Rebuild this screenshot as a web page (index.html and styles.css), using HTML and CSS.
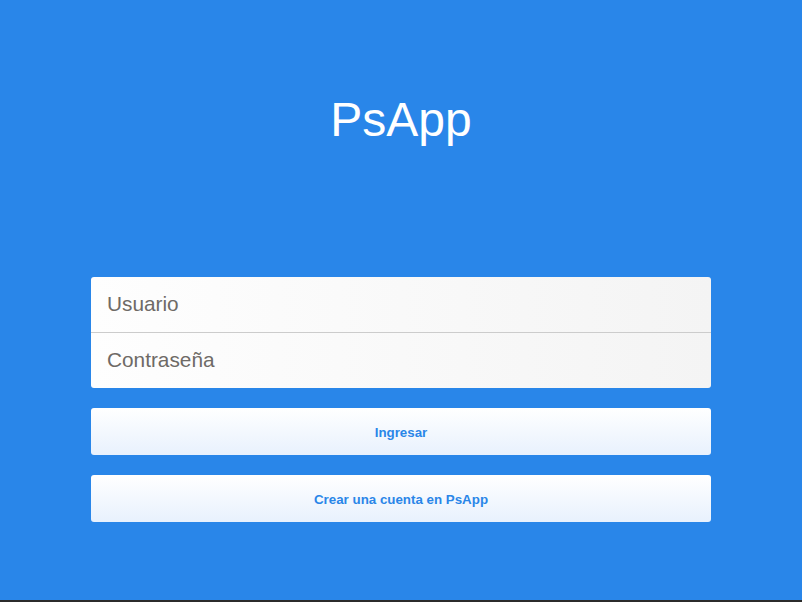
FILE: index.html
```html
<!DOCTYPE html>
<html lang="es">
<head>
<meta charset="utf-8">
<title>PsApp</title>
<link rel="stylesheet" href="styles.css">
</head>
<body>
<main class="page">
  <h1 class="title">PsApp</h1>
  <form class="login">
    <div class="fields">
      <input class="field" type="text" placeholder="Usuario">
      <input class="field" type="password" placeholder="Contraseña">
    </div>
    <button class="btn" type="button">Ingresar</button>
    <button class="btn" type="button">Crear una cuenta en PsApp</button>
  </form>
</main>
</body>
</html>
```
FILE: styles.css
```css
html, body {
  margin: 0;
  padding: 0;
}
body {
  background: #2b2b2b;
  font-family: "Liberation Sans", Arial, sans-serif;
}
.page {
  height: 600px;
  background: #2986e9;
  display: flex;
  flex-direction: column;
  align-items: center;
}
.title {
  margin: 96px 0 0;
  font-size: 48px;
  line-height: 48px;
  font-weight: normal;
  color: #ffffff;
}
.login {
  margin-top: 133px;
  width: 620px;
  display: flex;
  flex-direction: column;
  gap: 20px;
}
.fields {
  display: flex;
  flex-direction: column;
  border-radius: 3px;
  overflow: hidden;
  background: linear-gradient(to right, #fefefe, #f4f4f4);
}
.field {
  box-sizing: border-box;
  height: 55px;
  border: 0;
  margin: 0;
  padding: 0 16px 2px;
  background: transparent;
  font-family: "Liberation Sans", Arial, sans-serif;
  font-size: 20.8px;
  color: #555;
  outline: none;
}
.field + .field {
  height: 56px;
  border-top: 1px solid #cccccc;
}
.field::placeholder {
  color: #6e6a66;
  opacity: 1;
}
.btn {
  height: 47px;
  border: 0;
  border-radius: 3px;
  background: linear-gradient(to bottom, #ffffff, #e8f1fd);
  color: #2a86e8;
  font-family: "Liberation Sans", Arial, sans-serif;
  font-size: 13.333px;
  font-weight: bold;
  padding: 2px 0 0;
  cursor: pointer;
}
```
